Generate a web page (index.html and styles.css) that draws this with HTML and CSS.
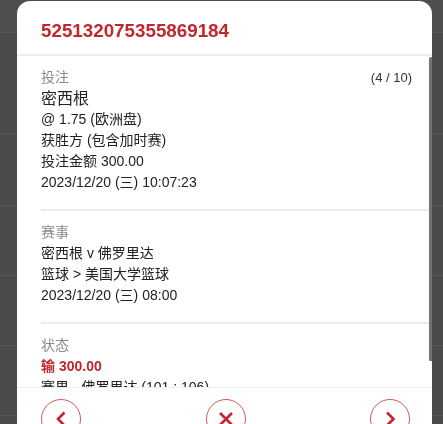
FILE: index.html
```html
<!DOCTYPE html>
<html lang="zh-CN">
<head>
<meta charset="utf-8">
<title>注单详情</title>
<link rel="stylesheet" href="styles.css">
</head>
<body>
<div class="bg-page">
  <div class="bg-row bg-top"></div>
  <div class="bg-row r1"></div>
  <div class="bg-row r2"></div>
  <div class="bg-row r3"></div>
  <div class="bg-row r4"></div>
  <div class="bg-row r5"></div>
</div>

<div class="modal">
  <div class="modal-header">
    <h1 class="ticket-id">525132075355869184</h1>
  </div>
  <div class="modal-body">
    <section class="section">
      <div class="label-row">
        <span class="label">投注</span>
        <span class="counter">(4 / 10)</span>
      </div>
      <div class="line pick">密西根</div>
      <div class="line">@ 1.75 (欧洲盘)</div>
      <div class="line">获胜方 (包含加时赛)</div>
      <div class="line">投注金额 300.00</div>
      <div class="line">2023/12/20 (三) 10:07:23</div>
    </section>
    <section class="section">
      <div class="label">赛事</div>
      <div class="line">密西根 v 佛罗里达</div>
      <div class="line">篮球 &gt; 美国大学篮球</div>
      <div class="line">2023/12/20 (三) 08:00</div>
    </section>
    <section class="section last">
      <div class="label">状态</div>
      <div class="line lose">输 300.00</div>
      <div class="line">赛果 - 佛罗里达 (101 : 106)</div>
    </section>
  </div>
  <div class="scroll-thumb"></div>
  <div class="modal-footer">
    <button class="circle-btn" aria-label="上一个">
      <svg viewBox="0 0 40 40" width="40" height="40"><path d="M23.5 13.5 L17 20 L23.5 26.5" /></svg>
    </button>
    <button class="circle-btn" aria-label="关闭">
      <svg viewBox="0 0 40 40" width="40" height="40"><path d="M14 14 L26 26 M26 14 L14 26" /></svg>
    </button>
    <button class="circle-btn" aria-label="下一个">
      <svg viewBox="0 0 40 40" width="40" height="40"><path d="M17 13.5 L23.5 20 L17 26.5" /></svg>
    </button>
  </div>
</div>
</body>
</html>
```
FILE: styles.css
```css
html, body {
  margin: 0;
  padding: 0;
}
body {
  width: 443px;
  height: 424px;
  overflow: hidden;
  background: #4a4a4a;
  font-family: "Liberation Sans", "Noto Sans CJK SC", Arial, sans-serif;
  color: #222;
}

/* dimmed page behind the dialog */
.bg-page {
  display: flex;
  flex-direction: column;
}
.bg-row {
  border-bottom: 1px solid #565656;
  box-sizing: border-box;
}
.bg-top { height: 33px; background: #4e4e4e; }
.r1 { height: 101px; }
.r2 { height: 72px; }
.r3 { height: 70px; }
.r4 { height: 70px; }
.r5 { height: 70px; }

/* dialog */
.modal {
  position: fixed;
  left: 17px;
  top: 1px;
  width: 415px;
  height: 452px;
  background: #fff;
  border-radius: 13px 13px 0 0;
  display: flex;
  flex-direction: column;
  overflow: hidden;
}
.modal-header {
  height: 55px;
  box-sizing: border-box;
  padding: 7px 24px 0;
  border-bottom: 2px solid #ececec;
  display: flex;
  align-items: center;
  flex-shrink: 0;
}
.ticket-id {
  margin: 0;
  font-size: 18.8px;
  font-weight: bold;
  color: #c1272d;
}

.modal-body {
  flex: 0 0 331px;
  overflow: hidden;
}

/* scrollbar thumb drawn over the body's right edge */
.scroll-thumb {
  position: absolute;
  left: 412px;
  top: 56px;
  width: 4px;
  height: 304px;
  background: #707275;
  border-radius: 2px 2px 1px 1px;
}

.section {
  margin-left: 24px;
  padding: 11px 20px 16px 0;
  border-bottom: 2px solid #ececec;
  font-size: 14px;
  line-height: 21px;
}
.section.last {
  border-bottom: none;
}
.label-row {
  display: flex;
  justify-content: space-between;
  align-items: center;
}
.label {
  color: #8a8a8a;
  font-size: 14px;
}
.counter {
  font-size: 13px;
  color: #333;
}
.line {
  color: #222;
}
.pick {
  font-size: 16px;
}
.lose {
  color: #c1272d;
  font-weight: bold;
}

.modal-footer {
  flex-shrink: 0;
  border-top: 1px solid #efefef;
  padding: 11px 22px 12px 24px;
  display: flex;
  justify-content: space-between;
}
.circle-btn {
  width: 40px;
  height: 40px;
  padding: 0;
  margin: 0;
  border: 1px solid #cf5a5e;
  border-radius: 50%;
  background: #fff;
  display: flex;
  align-items: center;
  justify-content: center;
  box-sizing: border-box;
}
.circle-btn svg {
  width: 40px;
  height: 40px;
  flex-shrink: 0;
  fill: none;
  stroke: #c1272d;
  stroke-width: 2.6;
}
```
